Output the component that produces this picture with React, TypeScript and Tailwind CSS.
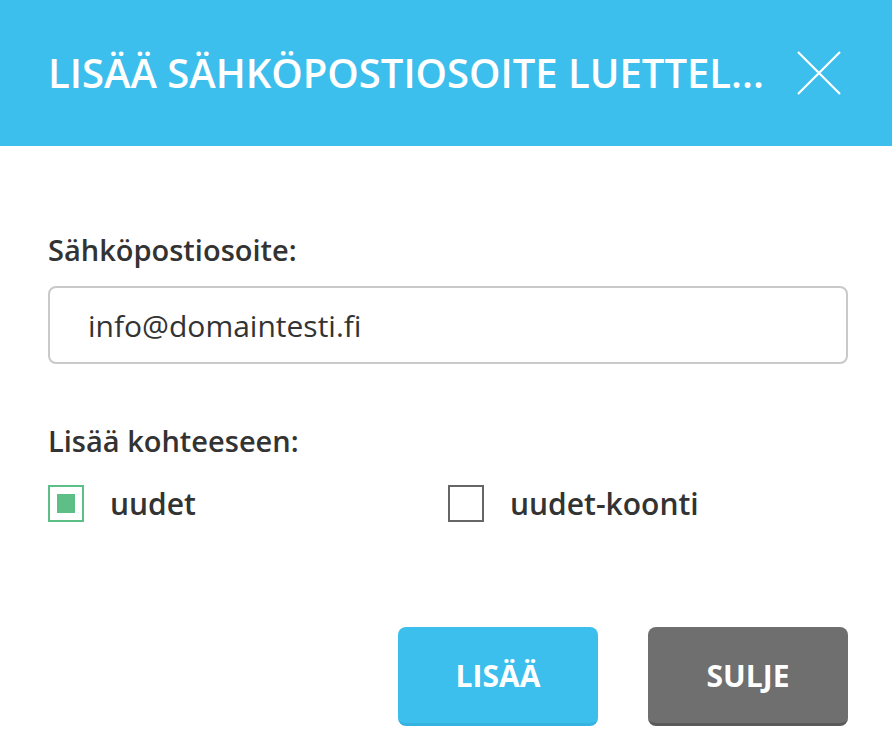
import { useState } from 'react';

const App = () => {
  const [email, setEmail] = useState('info@domaintesti.fi');
  const [lists, setLists] = useState({ uudet: true, koonti: false });

  return (
    <div className="w-[892px] h-[752px] bg-white overflow-hidden font-['Open_Sans',sans-serif]">
      {/* Header */}
      <div className="h-[146px] bg-[#3dbfed] flex items-center justify-between pl-[48px] pr-[50px]">
        <h1 className="text-white text-[40px] font-semibold leading-none whitespace-nowrap">
          LISÄÄ SÄHKÖPOSTIOSOITE LUETTEL...
        </h1>
        <button className="text-white" title="Sulje">
          <svg width="46" height="46" viewBox="0 0 46 46" fill="none" stroke="currentColor" strokeWidth="2.2">
            <path d="M2 2 L44 44 M44 2 L2 44" />
          </svg>
        </button>
      </div>

      {/* Body */}
      <div className="pl-[48px] pr-[44px] pt-[84px]">
        <label className="block text-[29px] font-semibold text-[#333] leading-[40px]">Sähköpostiosoite:</label>
        <input
          value={email}
          onChange={(e) => setEmail(e.target.value)}
          className="mt-[16px] w-full h-[78px] rounded-[8px] border-2 border-[#c9c9c9] px-[38px] text-[30px] text-[#333] outline-none"
        />

        <div className="mt-[57px] text-[29px] font-semibold text-[#333] leading-[40px]">Lisää kohteeseen:</div>
        <div className="mt-[24px] flex h-[37px]">
          <label className="w-[400px] flex items-center gap-[26px] cursor-pointer">
            <button
              onClick={() => setLists({ ...lists, uudet: !lists.uudet })}
              className={`w-[36px] h-[37px] shrink-0 flex items-center justify-center border-2 ${lists.uudet ? 'border-[#5dbf85]' : 'border-[#666]'}`}
            >
              {lists.uudet && <div className="w-[18px] h-[19px] bg-[#5dbf85]"></div>}
            </button>
            <span className="text-[30px] font-semibold text-[#333] leading-[40px]">uudet</span>
          </label>
          <label className="flex items-center gap-[26px] cursor-pointer">
            <button
              onClick={() => setLists({ ...lists, koonti: !lists.koonti })}
              className={`w-[36px] h-[37px] shrink-0 flex items-center justify-center border-2 ${lists.koonti ? 'border-[#5dbf85]' : 'border-[#666]'}`}
            >
              {lists.koonti && <div className="w-[18px] h-[19px] bg-[#5dbf85]"></div>}
            </button>
            <span className="text-[30px] font-semibold text-[#333] leading-[40px]">uudet-koonti</span>
          </label>
        </div>

        {/* Buttons */}
        <div className="mt-[105px] flex justify-end gap-[50px]">
          <button className="w-[200px] h-[99px] rounded-[8px] bg-[#3dbfed] border-b-[3px] border-[#35b2e0] text-white text-[30px] font-bold">
            LISÄÄ
          </button>
          <button className="w-[200px] h-[99px] rounded-[8px] bg-[#6f6f6f] border-b-[3px] border-[#5a5a5a] text-white text-[30px] font-bold">
            SULJE
          </button>
        </div>
      </div>
    </div>
  );
};

export default App;
